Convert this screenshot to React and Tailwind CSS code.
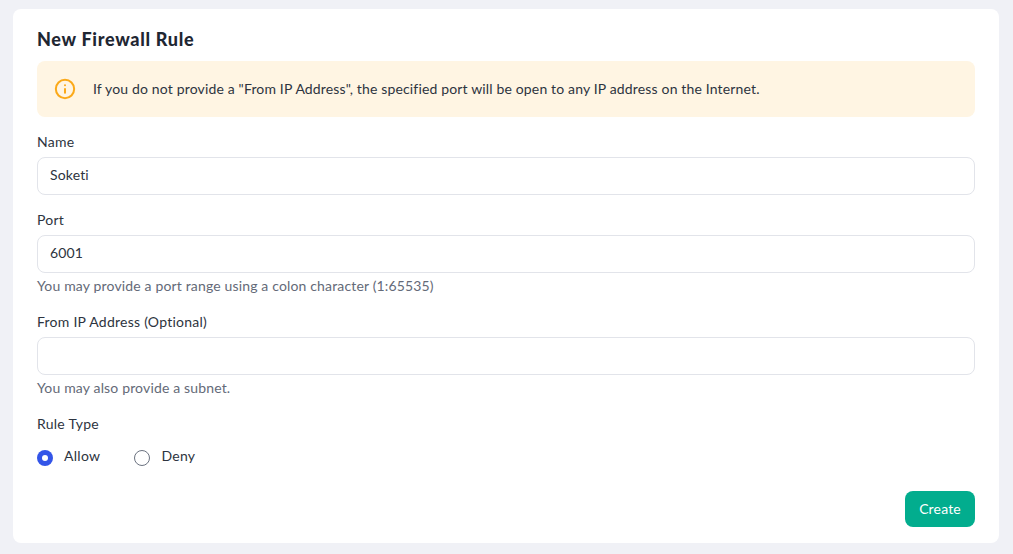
import React from 'react';
import { Info } from 'lucide-react';

const Field = ({ label, value, help }) => (
  <div className="mt-[15px]">
    <label className="block text-sm leading-5 tracking-[0.25px] text-[#2d3440]">{label}</label>
    <input
      readOnly
      value={value}
      className="mt-[5px] block h-[38px] w-full rounded-lg border border-[#e2e4ea] bg-white px-3 pb-[3px] text-sm tracking-[0.155px] text-[#2d3440] outline-none"
    />
    {help && <p className="mt-[3px] text-sm leading-5 tracking-[0.155px] text-[#646a78]">{help}</p>}
  </div>
);

const Radio = ({ label, checked }) => (
  <label className="flex items-center">
    {checked ? (
      <span className="flex h-4 w-4 items-center justify-center rounded-full bg-[#3355e8]">
        <span className="h-[6px] w-[6px] rounded-full bg-white" />
      </span>
    ) : (
      <span className="h-4 w-4 rounded-full border border-[#6b7280] bg-white" />
    )}
    <span className="ml-[11px] -mt-1 text-sm leading-5 tracking-[0.3px] text-[#2d3440]">{label}</span>
  </label>
);

export default function App() {
  return (
    <div className="h-[554px] bg-[#f0f1f6] pt-[9px] pl-[13px] pr-[14px] font-['Lato',sans-serif]">
      <div className="rounded-lg bg-white px-6 pt-4 pb-4">
        <h2 className="text-lg leading-7 font-black tracking-[0.7px] text-[#1f2733]">New Firewall Rule</h2>

        <div className="mt-2 flex h-14 items-center rounded-lg bg-[#fff5e3] pl-[17px]">
          <Info size={22} strokeWidth={2.2} className="shrink-0 text-[#fba919]" />
          <p className="ml-[17px] -mt-px text-sm tracking-[0.155px] text-[#2d3440]">
            If you do not provide a "From IP Address", the specified port will be open to any IP address on the Internet.
          </p>
        </div>

        <Field label="Name" value="Soketi" />
        <Field label="Port" value="6001" help="You may provide a port range using a colon character (1:65535)" />
        <div className="h-px" />
        <Field label="From IP Address (Optional)" value="" help="You may also provide a subnet." />
        <div className="h-px" />

        <div className="mt-[15px]">
          <div className="text-sm leading-5 tracking-[0.25px] text-[#2d3440]">Rule Type</div>
          <div className="mt-4 flex items-center gap-[34px]">
            <Radio label="Allow" checked />
            <Radio label="Deny" />
          </div>
        </div>

        <div className="mt-[25px] flex justify-end">
          <button className="h-9 w-[70px] rounded-lg bg-[#02ad8e] text-sm tracking-[0.155px] text-white">Create</button>
        </div>
      </div>
    </div>
  );
}
